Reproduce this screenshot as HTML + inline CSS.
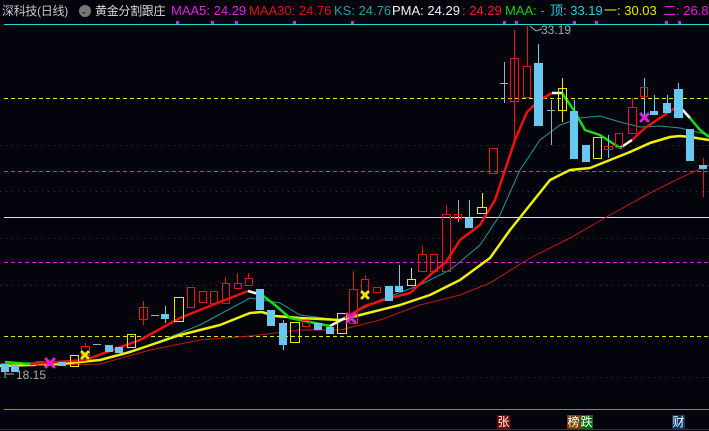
<!DOCTYPE html>
<html><head><meta charset="utf-8"><style>
html,body{margin:0;padding:0;background:#04040c;width:709px;height:431px;overflow:hidden}
.t{position:absolute;top:3px;font:13px "Liberation Sans","Noto Sans CJK SC",sans-serif;white-space:nowrap;line-height:16px}
.c{font-size:12px;letter-spacing:-0.3px}
.tag{position:absolute;top:415px;height:14px;width:13px;font:12px "Noto Sans CJK SC",sans-serif;color:#fff;text-align:center;line-height:14px}
</style></head><body>
<div class="t c" style="left:2px;color:#c8c8c8">深科技(日线)</div>
<div style="position:absolute;left:79px;top:5px;width:12px;height:12px;border-radius:6px;background:#777"></div>
<div class="t" style="left:80px;top:3px;font-size:9px;color:#222">⌄</div>
<div class="t c" style="left:95px;color:#d8d8d8">黄金分割跟庄</div>
<div class="t" style="left:171px;color:#e020e0">MAA5: 24.29</div>
<div class="t" style="left:249px;color:#e01010">MAA30: 24.76</div>
<div class="t" style="left:334px;color:#20a0a0">KS: 24.76</div>
<div class="t" style="left:392px;color:#f0f0f0">PMA: 24.29</div>
<div class="t" style="left:462px;color:#f02020">: 24.29</div>
<div class="t" style="left:505px;color:#10d010">MAA: -</div>
<div class="t" style="left:550px;color:#20d0e0">顶: 33.19</div>
<div class="t" style="left:604px;color:#e8e800">一: 30.03</div>
<div class="t" style="left:663px;color:#e020e0">二: 26.86</div>
<svg width="709" height="431" style="position:absolute;left:0;top:0" xmlns="http://www.w3.org/2000/svg">
<g fill="#e020e0"><rect x="176" y="21" width="3" height="3"/><rect x="211" y="21" width="3" height="3"/><rect x="235" y="21" width="3" height="3"/><rect x="293" y="21" width="3" height="3"/><rect x="351" y="21" width="3" height="3"/><rect x="503" y="21" width="3" height="3"/><rect x="515" y="21" width="3" height="3"/><rect x="573" y="21" width="3" height="3"/><rect x="595" y="21" width="3" height="3"/><rect x="665" y="21" width="3" height="3"/><rect x="678" y="21" width="3" height="3"/></g>
<line x1="4" y1="24.5" x2="709" y2="24.5" stroke="#20d8e0" stroke-width="1"/>
<g stroke="#3a3a3a" stroke-dasharray="1 5"><line x1="0" y1="145.5" x2="709" y2="145.5"/><line x1="0" y1="191.5" x2="709" y2="191.5"/><line x1="0" y1="238.5" x2="709" y2="238.5"/><line x1="0" y1="285.5" x2="709" y2="285.5"/><line x1="0" y1="377.5" x2="709" y2="377.5"/></g>
<line x1="4" y1="98.5" x2="709" y2="98.5" stroke="#e8e800" stroke-dasharray="4 3"/>
<line x1="4" y1="171.5" x2="709" y2="171.5" stroke="#e020e0" stroke-dasharray="4 3"/>
<line x1="4" y1="217.5" x2="709" y2="217.5" stroke="#e8e8a0"/>
<line x1="4" y1="262.5" x2="709" y2="262.5" stroke="#e020e0" stroke-dasharray="4 3"/>
<line x1="4" y1="336.5" x2="709" y2="336.5" stroke="#e8e800" stroke-dasharray="4 3"/>
<line x1="4" y1="409.5" x2="709" y2="409.5" stroke="#10d010"/>
<line x1="0" y1="429.5" x2="709" y2="429.5" stroke="#333"/>
<g fill="none" stroke-width="1">
<polyline stroke="#c01818" points="0,366 100,364 150,350 200,340 250,336 300,330 340,330 380,320 420,305 460,295 490,283 530,258 570,238 610,215 650,193 680,178 709,165"/>
<polyline stroke="#209898" points="0,364 100,360 150,345 200,325 250,298 280,303 300,315 340,320 380,300 420,285 450,270 480,245 500,215 520,170 540,140 560,125 580,118 600,116 620,122 640,127 660,126 680,128 709,135"/>
</g>
<g fill="none" stroke-width="2.5" stroke-linejoin="round">
<polyline stroke="#f0f000" points="0,366 60,364 100,360 130,352 180,335 220,325 250,313 262,312 275,316 300,318 340,320 360,315 400,305 430,295 460,280 490,258 510,230 530,205 550,180 570,170 590,168 610,160 630,152 650,143 670,137 680,136 690,137 709,140"/>
<polyline stroke="#10e010" points="5,362 30,364"/>
<polyline stroke="#f01010" points="30,364 85,360 140,340 180,318 215,304 248,291"/>
<polyline stroke="#ffffff" points="248,291 262,295"/>
<polyline stroke="#10e010" points="262,295 275,305 290,318 310,322 330,326"/>
<polyline stroke="#ffffff" points="330,326 345,318"/>
<polyline stroke="#f01010" points="345,318 365,306 390,298 410,293 430,275 446,262 460,240 480,225 495,200 505,170 515,140 527,112 540,100 552,93"/>
<polyline stroke="#ffffff" points="552,93 562,93"/>
<polyline stroke="#10e010" points="562,93 575,112 585,130 600,135 620,148"/>
<polyline stroke="#ffffff" points="620,148 632,140"/>
<polyline stroke="#f01010" points="632,140 645,128 660,118 675,108 680,107"/>
<polyline stroke="#ffffff" points="680,107 690,118"/>
<polyline stroke="#10e010" points="690,118 700,130 709,137"/>
</g>
<g stroke-width="1">
<g stroke="#f01010">
<line x1="85.5" y1="343" x2="85.5" y2="346"/><line x1="143.5" y1="301" x2="143.5" y2="325"/><line x1="225.5" y1="277" x2="225.5" y2="283"/><line x1="237.5" y1="273" x2="237.5" y2="283"/><line x1="248.5" y1="273" x2="248.5" y2="278"/><line x1="353.5" y1="271" x2="353.5" y2="289"/><line x1="365.5" y1="275" x2="365.5" y2="279"/><line x1="422.5" y1="246" x2="422.5" y2="254"/><line x1="446.5" y1="205" x2="446.5" y2="214"/><line x1="514.5" y1="30" x2="514.5" y2="140"/><line x1="527.5" y1="26" x2="527.5" y2="66"/><line x1="703.5" y1="158" x2="703.5" y2="197"/><line x1="632.5" y1="98" x2="632.5" y2="107"/>
</g>
<g stroke="#60d0f0">
<line x1="283.5" y1="320" x2="283.5" y2="350"/><line x1="399.5" y1="265" x2="399.5" y2="292"/><line x1="469.5" y1="200" x2="469.5" y2="228"/><line x1="538.5" y1="44" x2="538.5" y2="126"/><line x1="574.5" y1="100" x2="574.5" y2="159"/><line x1="644.5" y1="78" x2="644.5" y2="118"/><line x1="654.5" y1="95" x2="654.5" y2="115"/><line x1="667.5" y1="95" x2="667.5" y2="113"/><line x1="678.5" y1="83" x2="678.5" y2="89"/><line x1="608.5" y1="135" x2="608.5" y2="158"/><line x1="165.5" y1="306" x2="165.5" y2="323"/>
</g>
<g stroke="#aaa"><line x1="504.5" y1="62" x2="504.5" y2="103"/><line x1="551.5" y1="100" x2="551.5" y2="145"/><line x1="458.5" y1="200" x2="458.5" y2="222"/></g>
<g stroke="#e8e800"><line x1="562.5" y1="78" x2="562.5" y2="122"/><line x1="411.5" y1="268" x2="411.5" y2="279"/><line x1="482.5" y1="193" x2="482.5" y2="207"/></g>
<g fill="none" stroke="#f01010">
<rect x="81.5" y="346.5" width="8" height="9"/><rect x="139.5" y="307.5" width="8" height="12"/><rect x="187.5" y="287.5" width="7" height="20"/><rect x="199.5" y="291.5" width="7" height="11"/><rect x="210.5" y="291.5" width="7" height="12"/><rect x="222.5" y="283.5" width="7" height="20"/><rect x="234.5" y="283.5" width="7" height="5"/><rect x="245.5" y="278.5" width="7" height="7"/><rect x="302.5" y="320.5" width="7" height="6"/><rect x="349.5" y="289.5" width="8" height="34"/><rect x="361.5" y="279.5" width="7" height="13"/><rect x="373.5" y="287.5" width="7" height="5"/><rect x="418.5" y="254.5" width="8" height="17"/><rect x="430.5" y="254.5" width="7" height="17"/><rect x="442.5" y="214.5" width="8" height="57"/><rect x="454.5" y="214.5" width="7" height="4"/><rect x="489.5" y="148.5" width="8" height="25"/><rect x="510.5" y="58.5" width="8" height="43"/><rect x="523.5" y="66.5" width="7" height="31"/><rect x="604.5" y="146.5" width="8" height="3"/><rect x="615.5" y="133.5" width="7" height="14"/><rect x="628.5" y="107.5" width="8" height="26"/><rect x="640.5" y="87.5" width="7" height="9"/><rect x="36.5" y="361.5" width="7" height="4"/>
</g>
<g fill="none" stroke="#e8e800">
<rect x="70.5" y="355.5" width="8" height="11"/><rect x="127.5" y="334.5" width="8" height="13"/><rect x="174.5" y="297.5" width="9" height="24"/><rect x="290.5" y="322.5" width="9" height="20"/><rect x="337.5" y="313.5" width="9" height="20"/><rect x="407.5" y="279.5" width="8" height="6"/><rect x="477.5" y="207.5" width="9" height="6"/><rect x="558.5" y="88.5" width="8" height="22"/><rect x="593.5" y="137.5" width="8" height="21"/>
</g>
<g fill="#68c8f0">
<rect x="1" y="364" width="8" height="8"/><rect x="11" y="365" width="8" height="7"/><rect x="58" y="362" width="8" height="4"/><rect x="105" y="345" width="8" height="7"/><rect x="115" y="347" width="8" height="6"/><rect x="161" y="314" width="8" height="5"/><rect x="256" y="289" width="8" height="21"/><rect x="267" y="310" width="8" height="16"/><rect x="279" y="323" width="8" height="22"/><rect x="314" y="323" width="8" height="7"/><rect x="326" y="327" width="8" height="7"/><rect x="385" y="286" width="8" height="15"/><rect x="395" y="286" width="8" height="6"/><rect x="465" y="218" width="8" height="10"/><rect x="534" y="63" width="9" height="63"/><rect x="570" y="111" width="8" height="48"/><rect x="582" y="145" width="8" height="17"/><rect x="650" y="111" width="8" height="4"/><rect x="663" y="103" width="8" height="10"/><rect x="674" y="89" width="9" height="29"/><rect x="686" y="129" width="8" height="32"/><rect x="699" y="165" width="8" height="4"/>
</g>
<g stroke="#aaa"><line x1="500" y1="83.5" x2="508" y2="83.5"/><line x1="547" y1="110.5" x2="555" y2="110.5"/><line x1="93" y1="344.5" x2="101" y2="344.5"/><line x1="151" y1="315.5" x2="159" y2="315.5"/></g>
</g>
<g stroke-width="3" stroke-linecap="round">
<path d="M46 359 L54 367 M54 359 L46 367" stroke="#e020e0"/>
<path d="M82 352 L88 358 M88 352 L82 358" stroke="#e8e800"/>
<path d="M347 314 L355 322 M355 314 L347 322" stroke="#e020e0"/>
<path d="M362 292 L368 298 M368 292 L362 298" stroke="#e8e800"/>
<path d="M641 114 L648 121 M648 114 L641 121" stroke="#e020e0"/>
</g>
<path d="M530 26 L536 31 L542 29" fill="none" stroke="#aaa"/>
<text x="541" y="34" font-family="Liberation Sans" font-size="12" fill="#aaa">33.19</text>
<path d="M5 370 L5 378 M5 374 L14 374" fill="none" stroke="#aaa"/>
<text x="16" y="379" font-family="Liberation Sans" font-size="12" fill="#aaa">18.15</text>
</svg>
<div class="tag" style="left:497px;background:#7a0000">张</div>
<div class="tag" style="left:567px;background:#7a4000">榜</div>
<div class="tag" style="left:580px;background:#0a6a0a">跌</div>
<div class="tag" style="left:672px;background:#0a3a6a">财</div>
</body></html>
